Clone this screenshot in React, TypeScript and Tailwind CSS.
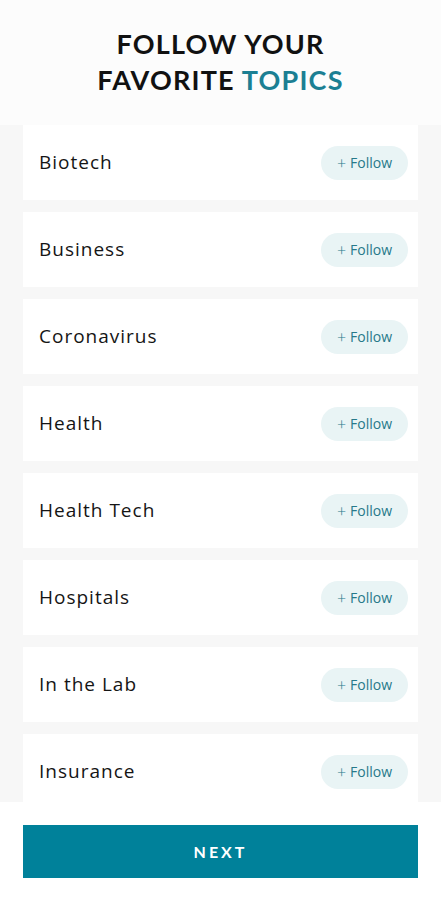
import React from "react";

const topics = [
  "Biotech",
  "Business",
  "Coronavirus",
  "Health",
  "Health Tech",
  "Hospitals",
  "In the Lab",
  "Insurance",
];

export default function App() {
  return (
    <div className="h-[900px] w-full flex flex-col bg-[#f7f7f7] font-['Lato',sans-serif] overflow-hidden">
      {/* header */}
      <div className="h-[125px] shrink-0 bg-[#fcfcfc] flex items-start justify-center pt-[26px]">
        <h1 className="text-center text-[27px] leading-[36px] font-bold tracking-[1.2px] text-[#111]">
          FOLLOW YOUR
          <br />
          FAVORITE <span className="text-[#1b7f93]">TOPICS</span>
        </h1>
      </div>

      {/* topic list */}
      <div className="flex-1 overflow-hidden px-[23px] flex flex-col gap-[12px]">
        {topics.map((t) => (
          <div
            key={t}
            className="h-[75px] shrink-0 bg-white flex items-center justify-between pl-[16px] pr-[10px]"
          >
            <span className="font-['Open_Sans',sans-serif] text-[19px] tracking-[1px] text-[#151515]">
              {t}
            </span>
            <button className="h-[34px] w-[87px] rounded-full bg-[#e9f4f5] text-[#27798a] font-['Open_Sans',sans-serif] text-[14px] flex items-center justify-center gap-[4px]">
              <span className="text-[16px] leading-none font-light">+</span>
              <span>Follow</span>
            </button>
          </div>
        ))}
      </div>

      {/* footer */}
      <div className="h-[98px] shrink-0 bg-white px-[23px] pt-[23px]">
        <button className="w-full h-[53px] bg-[#00819a] text-white font-bold text-[16px] tracking-[3px]">
          NEXT
        </button>
      </div>
    </div>
  );
}
